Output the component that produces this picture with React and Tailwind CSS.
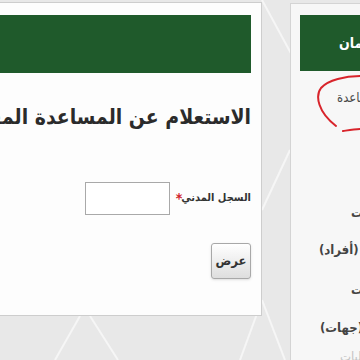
export default function App() {
  const font = { fontFamily: '"DejaVu Sans Condensed", "DejaVu Sans", sans-serif' };

  return (
    <div className="relative w-[360px] h-[360px] overflow-hidden bg-[#e8e8e8]" style={font}>
      {/* faint diamond pattern of the page background */}
      <svg className="absolute inset-0" width="360" height="360">
        <g stroke="#f6f6f6" strokeWidth="2" fill="none">
          <path d="M262 0 L300 70" />
          <path d="M290 150 L262 210" />
          <path d="M80 316 L55 360" />
          <path d="M90 316 L118 360" />
          <path d="M262 300 L240 360" />
          <path d="M262 300 L285 360" />
        </g>
      </svg>

      <div className="relative flex items-start pt-[2px]">
        {/* main card */}
        <div
          dir="rtl"
          className="-ml-[40px] w-[302px] h-[314px] shrink-0 bg-[#fdfdfd] border border-[#cdcdcd] pt-[12px] px-[10px]"
        >
          <div className="h-[58px] bg-[#1f5a2b]" />
          <div className="mt-[27px] h-[34px] leading-[34px] text-[21px] font-bold text-[#2b2b2b] whitespace-nowrap">
            الاستعلام عن المساعدة المقطوعة
          </div>

          <div className="mt-[48px] flex items-center h-[33px]">
            <div className="w-[68px] text-[11px] font-bold text-[#333] whitespace-nowrap text-right">
              السجل المدني
            </div>
            <div className="w-[8px] text-center text-[14px] font-bold text-[#d0202a]">*</div>
            <input
              className="mr-[5px] w-[85px] h-[33px] bg-white border border-[#a9a9a9] outline-none"
              type="text"
            />
          </div>

          <button className="mt-[28px] w-[40px] h-[36px] rounded-[3px] border border-[#a8a8a8] bg-gradient-to-b from-white to-[#dedede] shadow-sm text-[13px] font-bold text-[#333]">
            عرض
          </button>
        </div>

        {/* side menu card */}
        <div className="ml-[28px] mt-[1px] w-[300px] h-[400px] shrink-0 bg-[#f7f7f7] border-l border-t border-[#d4d4d4] pt-[11px] pl-[9px]">
          <div
            dir="rtl"
            className="h-[56px] bg-[#1f5a2b] text-left pl-[39px] leading-[56px] text-[14px] font-bold text-white whitespace-nowrap"
          >
            خدمات الضمان
          </div>

          <div dir="rtl" className="text-left text-[13px] text-[#4a4a4a] whitespace-nowrap">
            <div className="mt-[17px] h-[20px] leading-[20px] pl-[37px]">الاستعلام عن المساعدة</div>
            <div className="mt-[95px] h-[20px] leading-[20px] pl-[51px] font-bold text-[#444]">طلبات المساعدات</div>
            <div className="mt-[17px] h-[20px] leading-[20px] pl-[19px] font-bold text-[#444]">المساعدات (أفراد)</div>
            <div className="mt-[20px] h-[20px] leading-[20px] pl-[51px] font-bold text-[#444]">طلبات المساعدات</div>
            <div className="mt-[18px] h-[20px] leading-[20px] pl-[20px] font-bold text-[#444]">المساعدات (جهات)</div>
            <div className="mt-[9px] h-[20px] leading-[20px] pl-[40px] text-[#c4c4c4]">الاستعلام عن الطلبات</div>
          </div>
        </div>
      </div>

      {/* red hand-drawn annotation */}
      <svg className="absolute inset-0 pointer-events-none" width="360" height="360">
        <g stroke="#d8242b" strokeWidth="2" fill="none" strokeLinecap="round">
          <path d="M362 76 C345 76 328 80 321 88 C315 96 318 112 336 126" />
          <path d="M343 131 C350 130 356 129 362 129" />
        </g>
      </svg>
    </div>
  );
}
